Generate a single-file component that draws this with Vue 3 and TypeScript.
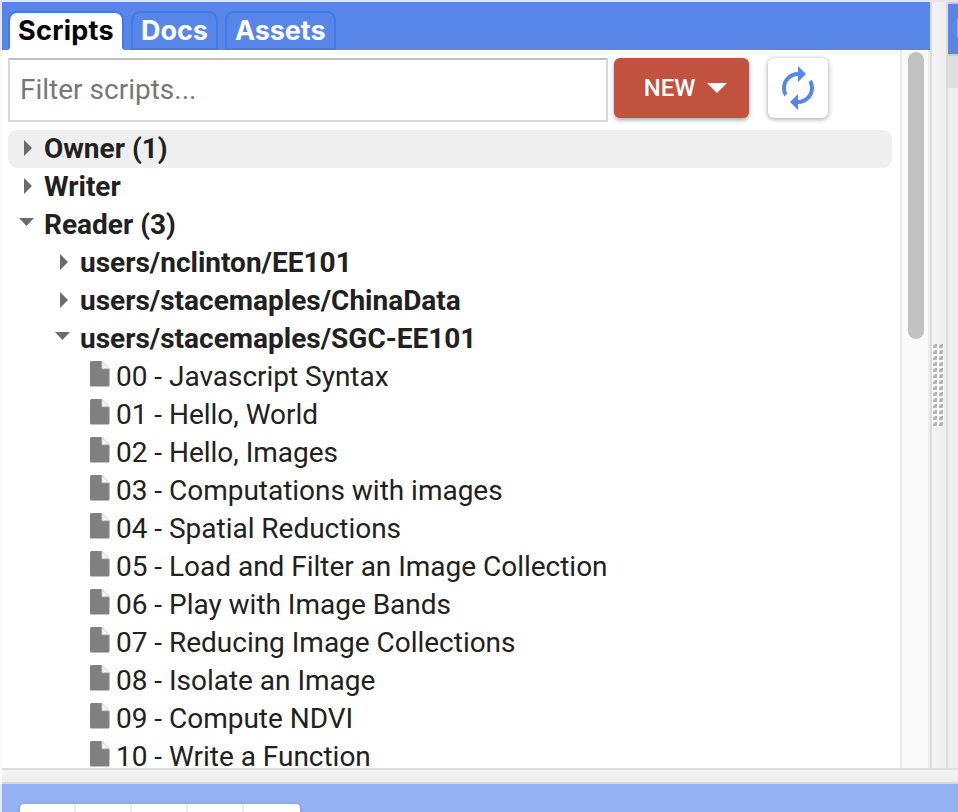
<script setup lang="ts">
import { ref } from 'vue'

interface TreeNode {
  label: string
  kind: 'folder' | 'repo' | 'file'
  open?: boolean
  hovered?: boolean
}

const tabs = ['Scripts', 'Docs', 'Assets']
const activeTab = ref('Scripts')
const filter = ref('')

const nodes: TreeNode[] = [
  { label: 'Owner (1)', kind: 'folder', hovered: true },
  { label: 'Writer', kind: 'folder' },
  { label: 'Reader (3)', kind: 'folder', open: true },
  { label: 'users/nclinton/EE101', kind: 'repo' },
  { label: 'users/stacemaples/ChinaData', kind: 'repo' },
  { label: 'users/stacemaples/SGC-EE101', kind: 'repo', open: true },
  { label: '00 - Javascript Syntax', kind: 'file' },
  { label: '01 - Hello, World', kind: 'file' },
  { label: '02 - Hello, Images', kind: 'file' },
  { label: '03 - Computations with images', kind: 'file' },
  { label: '04 - Spatial Reductions', kind: 'file' },
  { label: '05 - Load and Filter an Image Collection', kind: 'file' },
  { label: '06 - Play with Image Bands', kind: 'file' },
  { label: '07 - Reducing Image Collections', kind: 'file' },
  { label: '08 - Isolate an Image', kind: 'file' },
  { label: '09 - Compute NDVI', kind: 'file' },
  { label: '10 - Write a Function', kind: 'file' },
]
</script>

<template>
  <div class="app">
    <div class="workspace">
      <section class="panel">
        <nav class="tabs">
          <button
            v-for="tab in tabs"
            :key="tab"
            class="tab"
            :class="{ active: tab === activeTab }"
            @click="activeTab = tab"
          >{{ tab }}</button>
        </nav>
        <div class="body">
          <div class="content">
            <div class="toolbar">
              <input v-model="filter" class="filter" placeholder="Filter scripts..." />
              <button class="new">
                <span>NEW</span>
                <svg width="20" height="10" viewBox="0 0 20 10"><path d="M0 0h20L10 10z" fill="#fff" /></svg>
              </button>
              <button class="refresh" aria-label="Refresh">
                <svg width="48" height="48" viewBox="0 0 24 24">
                  <path
                    fill="#5886e8"
                    d="M12 6v3l4-4-4-4v3c-4.42 0-8 3.58-8 8 0 1.57.46 3.03 1.24 4.26L6.7 14.8c-.45-.83-.7-1.79-.7-2.8 0-3.31 2.69-6 6-6zm6.76 1.74L17.3 9.2c.44.84.7 1.79.7 2.8 0 3.31-2.69 6-6 6v-3l-4 4 4 4v-3c4.42 0 8-3.58 8-8 0-1.57-.46-3.03-1.24-4.26z"
                  />
                </svg>
              </button>
            </div>
            <ul class="tree">
              <li
                v-for="node in nodes"
                :key="node.label"
                class="row"
                :class="[node.kind, { hovered: node.hovered }]"
              >
                <svg v-if="node.kind === 'file'" class="file-icon" width="20" height="26" viewBox="0 0 20 26">
                  <path d="M1.5 0H12v8h7.500v16q0 1.500-1.500 1.500H1.500Q0 25.500 0 24V1.500Q0 0 1.500 0z" fill="#808080" />
                  <path d="M12 .5V7.700h7z" fill="#fff" stroke="#c4c4c4" stroke-width="1" />
                </svg>
                <svg v-else-if="node.open" class="arrow" width="16" height="16" viewBox="0 0 16 16">
                  <path d="M1 2h15L8.500 10z" fill="#6b6b6b" />
                </svg>
                <svg v-else class="arrow" width="16" height="16" viewBox="0 0 16 16">
                  <path d="M6 0l8 8-8 8z" fill="#6b6b6b" />
                </svg>
                <span class="label">{{ node.label }}</span>
              </li>
            </ul>
          </div>
          <div class="scrollbar"><div class="thumb"></div></div>
        </div>
      </section>
      <div class="splitter">
        <div class="grip"><i v-for="n in 28" :key="n"></i></div>
      </div>
      <section class="editor">
        <div class="editor-head"><i></i></div>
        <div class="editor-bar"></div>
      </section>
    </div>
    <div class="h-splitter"></div>
    <div class="map">
      <div class="map-tools"><i v-for="n in 5" :key="n"></i></div>
    </div>
  </div>
</template>

<style>
body {
  margin: 0;
  overflow: hidden;
}
</style>

<style scoped>
* {
  box-sizing: border-box;
}
.app {
  width: 958px;
  height: 812px;
  display: flex;
  flex-direction: column;
  padding-left: 2px;
  border-top: 2px solid #e5e5e5;
  background: linear-gradient(#dfe6f6 48px, #fcfcfc 48px, #fcfcfc 782px, #e3eafa 782px);
  font-family: Roboto, sans-serif;
  overflow: hidden;
}
.workspace {
  display: flex;
  height: 766px;
  flex: none;
  background: #fff;
}
.panel {
  width: 928px;
  display: flex;
  flex-direction: column;
}
.tabs {
  height: 48px;
  flex: none;
  display: flex;
  align-items: flex-end;
  gap: 7px;
  padding-left: 6px;
  background: #5886e8;
}
.tab {
  height: 39px;
  padding: 0 8px 1px;
  border: 2px solid #4479e6;
  border-radius: 9px 9px 0 0;
  background: transparent;
  color: #fff;
  font: 700 27px/36px Inter, sans-serif;
  letter-spacing: -0.05px;
}
.tab.active {
  border-bottom-color: #fff;
  background: #fff;
  color: #000;
  letter-spacing: 0.3px;
}
.body {
  flex: 1;
  min-height: 0;
  display: flex;
}
.content {
  flex: 1;
  padding: 8px 8px 0 6px;
}
.toolbar {
  display: flex;
  height: 72px;
}
.filter {
  width: 600px;
  height: 64px;
  padding: 0 10px 2px;
  border: 2px solid #d9d9d9;
  border-top-color: #c0c0c0;
  background: #fff;
  font: 400 28px Roboto, sans-serif;
  outline: none;
}
.filter::placeholder {
  color: #777;
}
.new,
.refresh {
  display: flex;
  align-items: center;
  justify-content: center;
  height: 60px;
  padding: 0;
  border: 0;
  border-radius: 6px;
}
.new {
  width: 135px;
  margin-left: 6px;
  padding-left: 8px;
  gap: 12px;
  background: #c0523f;
  box-shadow: 0 2px 4px rgba(0, 0, 0, 0.35);
  color: #fff;
  font: 500 24px Roboto, sans-serif;
}
.refresh {
  width: 60px;
  margin-left: 19px;
  background: #fff;
  box-shadow: 0 1px 5px rgba(0, 0, 0, 0.4);
}
.tree {
  margin: 0;
  padding: 0;
  list-style: none;
}
.row {
  display: flex;
  align-items: center;
  height: 38px;
  color: #212121;
  font-size: 28px;
  line-height: 38px;
  white-space: nowrap;
}
.folder,
.repo {
  gap: 10px;
  font-weight: 700;
}
.folder {
  padding-left: 10px;
}
.repo {
  padding-left: 46px;
}
.file {
  padding-left: 82px;
  gap: 6px;
  letter-spacing: -0.02px;
}
.file-icon {
  margin-top: -7px;
}
.arrow {
  margin-top: -2px;
}
.hovered {
  border-radius: 9px;
  background: #efefef;
}
.scrollbar {
  width: 30px;
  padding: 2px 4px 0 6px;
  border-left: 2px solid #e7e7e7;
  border-right: 2px solid #ececec;
  background: #fafafa;
}
.thumb {
  width: 16px;
  height: 287px;
  border-radius: 8px;
  background: #c1c1c1;
}
.splitter {
  width: 18px;
  display: flex;
  align-items: center;
  border-left: 2px solid #dcdcdc;
  border-right: 2px solid #dcdcdc;
  background: linear-gradient(90deg, #f4f4f4, #ededed);
}
.grip {
  display: grid;
  grid-template-columns: 4px 4px;
  gap: 2px;
  padding: 0 1px;
  background: #fafafa;
}
.grip i {
  width: 4px;
  height: 4px;
  background: linear-gradient(135deg, #dedede 15%, #aaa 55%, #cacaca);
}
.editor {
  flex: 1;
  background: #eee;
}
.editor-head {
  height: 54px;
  display: flex;
  align-items: center;
  justify-content: flex-end;
  border-top: 2px solid #c9c9c9;
  border-bottom: 2px solid #cbcbcb;
  background: #5886e8;
}
.editor-head i {
  width: 1px;
  height: 20px;
  margin-bottom: 2px;
  background: #9ab5f1;
}
.editor-bar {
  height: 32px;
  background: #dedede;
}
.h-splitter {
  position: relative;
  height: 16px;
  flex: none;
  border-top: 2px solid #dcdcdc;
  border-bottom: 2px solid #d8d8d8;
  background: linear-gradient(#f4f4f4, #ededed);
}
.map {
  height: 28px;
  flex: none;
  padding: 20px 0 0 18px;
  background: #93b1f3;
}
.map-tools {
  display: flex;
  width: 280px;
  height: 20px;
  border-radius: 4px;
  background: #fff;
  box-shadow: 0 1px 4px rgba(0, 0, 0, 0.18);
  overflow: hidden;
}
.map-tools i {
  width: 56px;
}
.map-tools i:not(:last-child) {
  border-right: 2px solid #ededed;
}
</style>
